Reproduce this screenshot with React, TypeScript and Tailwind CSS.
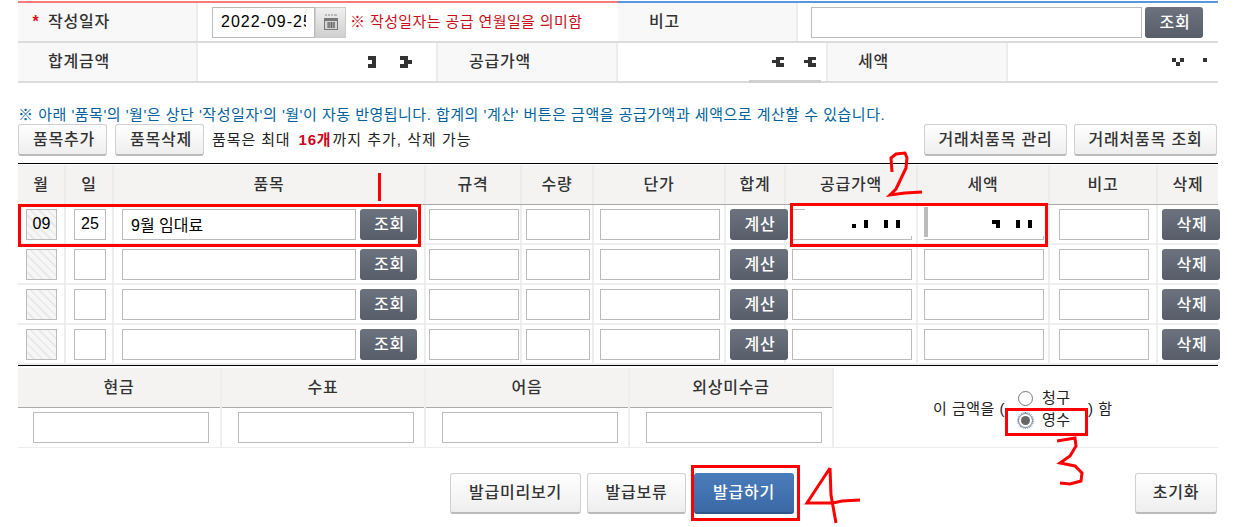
import React from 'react';

const font = '[font-family:"Liberation_Sans","Noto_Sans_CJK_KR",sans-serif]';

const hatch =
  'bg-[repeating-linear-gradient(45deg,#f6f6f6_0px,#f6f6f6_4px,#e9e9e9_4px,#e9e9e9_6px)]';

const Input: React.FC<{ className?: string; value?: string; disabled?: boolean }> = ({ className = '', value = '', disabled }) => (
  <input
    readOnly
    value={value}
    className={`h-[31px] shrink-0 border border-[#bbb] text-[16px] text-black outline-none ${disabled ? hatch : 'bg-white'} ${className}`}
  />
);

const DarkButton: React.FC<{ label: string; className?: string }> = ({ label, className = 'w-[58px]' }) => (
  <button className={`relative z-10 flex h-[31px] shrink-0 items-center justify-center rounded-[3px] bg-gradient-to-b from-[#6d737e] to-[#575d69] pl-[2px] pt-[2px] text-[16px] font-medium tracking-[0.8px] text-white ${className}`}>
    {label}
  </button>
);

const LightButton: React.FC<{ label: string; className?: string }> = ({ label, className = '' }) => (
  <button
    className={`flex shrink-0 items-center justify-center rounded-[3px] border border-[#d0d0d0] border-b-2 border-b-[#bbb] bg-gradient-to-b from-white to-[#eeeeee] text-[16px] font-medium tracking-[0.8px] text-[#333] ${className}`}
  >
    {label}
  </button>
);

const Blocks: React.FC<{ width: number; height: number; fill: string; rects: number[][] }> = ({ width, height, fill, rects }) => (
  <svg width={width} height={height} className="shrink-0">
    {rects.map(([x, y, w, h], index) => (
      <rect key={index} x={x} y={y} width={w} height={h} fill={fill} />
    ))}
  </svg>
);

const Label: React.FC<{ text: string; className?: string }> = ({ text, className = '' }) => (
  <div className={`flex items-center border-r-2 border-[#ececec] bg-[#f8f8f8] pl-[30px] text-[16px] font-medium tracking-[0.8px] text-[#333] ${className}`}>
    {text}
  </div>
);

const columns = 'grid grid-cols-[48px_48px_312px_96px_72px_132px_60px_132px_132px_108px_60px]';
const headers = ['월', '일', '품목', '규격', '수량', '단가', '합계', '공급가액', '세액', '비고', '삭제'];
const payments = [
  { title: '현금', pad: 'pl-[15px]' },
  { title: '수표', pad: 'pl-[16px]' },
  { title: '어음', pad: 'pl-[16px]' },
  { title: '외상미수금', pad: 'pl-[16px]' },
];
const cellLine = 'flex items-center border-r-2 border-[#eeeeee]';

const ItemRow: React.FC<{ first?: boolean }> = ({ first }) => (
  <div className={`${columns} h-10 border-b-2 border-[#eeeeee]`}>
    <div className={`${cellLine} pl-[8px]`}>
      <Input disabled value={first ? '09' : ''} className="w-[31px] px-[4px] text-center text-[#444]" />
    </div>
    <div className={`${cellLine} pl-[8px]`}>
      <Input value={first ? '25' : ''} className="w-[32px] px-[4px] text-center" />
    </div>
    <div className={`${cellLine} gap-[4px] pl-[8px]`}>
      <Input value={first ? '9월 임대료' : ''} className="w-[234px] pl-[8px]" />
      <DarkButton label="조회" className="w-[57px]" />
    </div>
    <div className={`${cellLine} pl-[3px]`}>
      <Input className="w-[90px]" />
    </div>
    <div className={`${cellLine} pl-[4px]`}>
      <Input className="w-[64px]" />
    </div>
    <div className={`${cellLine} pl-[6px]`}>
      <Input className="w-[120px]" />
    </div>
    <div className={`${cellLine} pl-[4px]`}>
      <DarkButton label="계산" />
    </div>
    <div className={`${cellLine} pl-[6px]`}>
      {first ? (
        <div className="relative flex h-[31px] w-[120px] shrink-0 items-center justify-end border-b border-[#bbb] pr-[12px]">
          <span className="absolute left-0 top-0 h-px w-[13px] bg-[#bbb]" />
          <span className="absolute bottom-0 right-0 h-[3px] w-px bg-[#bbb]" />
          <Blocks width={48} height={8} fill="#000" rects={[[0, 4, 4, 4], [12, 0, 4, 8], [32, 0, 4, 8], [44, 0, 4, 8]]} />
        </div>
      ) : (
        <Input className="w-[120px]" />
      )}
    </div>
    <div className={`${cellLine} pl-[6px]`}>
      {first ? (
        <div className="relative flex h-[31px] w-[120px] shrink-0 items-center justify-end border-b border-[#bbb] pr-[12px]">
          <span className="absolute -top-[2px] left-0 h-[30px] w-[4px] bg-[#bbb]" />
          <span className="absolute bottom-0 right-0 h-[3px] w-px bg-[#bbb]" />
          <Blocks width={40} height={8} fill="#000" rects={[[0, 0, 8, 4], [4, 4, 4, 4], [24, 0, 4, 8], [36, 0, 4, 8]]} />
        </div>
      ) : (
        <Input className="w-[120px]" />
      )}
    </div>
    <div className={`${cellLine} pl-[9px]`}>
      <Input className="w-[90px]" />
    </div>
    <div className="flex items-center pl-[4px]">
      <DarkButton label="삭제" />
    </div>
  </div>
);

const App: React.FC = () => {
  return (
    <div className={`relative h-[527px] w-[1241px] overflow-hidden bg-white pl-[18px] pt-px ${font}`}>
      <div className="w-[1200px]">
        <div className="flex h-[2px]">
          <div className="w-[600px] bg-[#f87a7a]" />
          <div className="w-[600px] bg-[#5b97e0]" />
        </div>

        <div className="grid h-10 grid-cols-[180px_420px_180px_420px] border-b-2 border-[#dcdcdc]">
          <div className="flex items-center border-r-2 border-[#ececec] bg-[#f8f8f8] pl-[14px] text-[16px] font-medium tracking-[0.8px] text-[#333]">
            <span className="mr-[8px] w-[8px] text-center font-bold leading-none text-[#d8141c]">*</span>
            작성일자
          </div>
          <div className="flex items-center pl-[14px]">
            <Input value="2022-09-25" className="w-[103px] px-[8px] tracking-[1px]" />
            <div className="flex h-[31px] w-[31px] shrink-0 items-center justify-center border border-[#ccc] bg-gradient-to-b from-[#f0f0f0] to-[#cfcfcf]">
              <svg width="14" height="16" viewBox="0 0 14 16">
                <path d="M1 1h2M4 1h2M7 1h2M10 1h3" stroke="#888" strokeWidth="1" />
                <rect x="0.5" y="4.5" width="13" height="11" fill="#d4d4d4" stroke="#777" />
                <rect x="1" y="5" width="12" height="2" fill="#777" />
                <path d="M3 9h8M3 11h8M3 13h8M5 8v6M7.5 8v6M10 8v6" stroke="#666" strokeWidth="1" />
              </svg>
            </div>
            <span className="ml-[4px] whitespace-nowrap text-[15px] tracking-[0.4px] text-[#c8101a]">※ 작성일자는 공급 연월일을 의미함</span>
          </div>
          <Label text="비고" className="pl-[31px]" />
          <div className="flex items-center gap-[3px] pl-[13px]">
            <Input className="w-[331px]" />
            <DarkButton label="조회" />
          </div>
        </div>

        <div className="grid h-10 grid-cols-[180px_240px_180px_210px_180px_210px] border-b-2 border-[#dcdcdc]">
          <Label text="합계금액" />
          <div className="flex items-center justify-end border-r-2 border-[#ececec] pr-[24px]">
            <Blocks width={44} height={12} fill="#333" rects={[[0, 0, 8, 4], [4, 4, 4, 4], [0, 8, 8, 4], [32, 0, 8, 4], [36, 4, 8, 4], [32, 8, 8, 4]]} />
          </div>
          <Label text="공급가액" className="pl-[31px]" />
          <div className="relative flex items-center justify-end border-r-2 border-[#ececec] pr-[10px]">
            <Blocks width={44} height={10} fill="#333" rects={[[4, 0, 8, 3], [0, 3, 8, 3], [4, 6, 8, 4], [36, 0, 8, 3], [32, 3, 8, 3], [36, 6, 8, 4]]} />
            <span className="absolute bottom-[-2px] left-[131px] h-[3px] w-[72px] bg-[#cfcfcf]" />
          </div>
          <Label text="세액" />
          <div className="flex items-center justify-end pr-[11px]">
            <Blocks width={35} height={8} fill="#333" rects={[[0, 0, 4, 4], [8, 0, 4, 4], [4, 4, 4, 4], [31, 0, 4, 4]]} />
          </div>
        </div>

        <p className="mt-[22px] h-[19px] whitespace-nowrap text-[15px] leading-[19px] tracking-[0.5px] text-[#00629c]">
          ※ 아래 '품목'의 '월'은 상단 '작성일자'의 '월'이 자동 반영됩니다. 합계의 '계산' 버튼은 금액을 공급가액과 세액으로 계산할 수 있습니다.
        </p>

        <div className="flex h-[32px] items-center">
          <LightButton label="품목추가" className="h-[32px] w-[89px] pl-[3px]" />
          <LightButton label="품목삭제" className="ml-[8px] h-[32px] w-[89px] pl-[3px]" />
          <span className="ml-[8px] text-[15px] tracking-[0.9px] text-[#222]">품목은 최대</span>
          <span className="ml-[8px] text-[15px] font-bold tracking-[0.8px] text-[#d0021b]">16개</span>
          <span className="ml-[1px] text-[15px] tracking-[1px] text-[#222]">까지 추가, 삭제 가능</span>
          <LightButton label="거래처품목 관리" className="ml-auto h-[32px] w-[143px]" />
          <LightButton label="거래처품목 조회" className="ml-[7px] mr-px h-[32px] w-[143px]" />
        </div>

        <div className="mt-[7px] border-t border-black pt-px">
          <div className={`${columns} h-10 border-b border-[#aaaaaa] bg-[#f4f3f2]`}>
            {headers.map((header, index) => (
              <div
                key={header}
                className={`flex items-center justify-center text-[16px] font-medium tracking-[0.8px] text-[#333] ${index < headers.length - 1 ? 'border-r-2 border-[#ebebeb]' : ''}`}
              >
                {header}
              </div>
            ))}
          </div>
          <ItemRow first />
          <ItemRow />
          <ItemRow />
          <ItemRow />
        </div>

        <div className="grid h-[83px] grid-cols-[204px_204px_204px_204px_384px] border-t border-black pt-[2px]">
          {payments.map(({ title, pad }) => (
            <div key={title} className="flex flex-col border-b border-r-2 border-[#eeeeee]">
              <div className="flex h-10 shrink-0 items-center justify-center border-b border-[#aaaaaa] bg-[#f4f3f2] text-[16px] font-medium tracking-[0.8px] text-[#333]">
                {title}
              </div>
              <div className={`flex flex-1 items-center ${pad}`}>
                <Input className="w-[176px]" />
              </div>
            </div>
          ))}
          <div className="flex items-center border-b border-[#eeeeee] pl-[99px] pt-[4px] text-[15px] tracking-[0.5px] text-[#222]">
            <span className="w-[72px] shrink-0 whitespace-nowrap">이 금액을 (</span>
            <div className="flex w-[83px] shrink-0 flex-col gap-[6px] pl-[13px]">
              <label className="flex h-[16px] items-center gap-[9px]">
                <span className="h-[15px] w-[15px] shrink-0 rounded-full border border-[#777] bg-white" />
                청구
              </label>
              <label className="flex h-[16px] items-center gap-[9px]">
                <span className="flex h-[15px] w-[15px] shrink-0 items-center justify-center rounded-full border border-[#777] bg-white outline-1 outline-dotted outline-[#5b8fe0]">
                  <span className="h-[9px] w-[9px] rounded-full bg-[#666]" />
                </span>
                영수
              </label>
            </div>
            <span className="whitespace-nowrap">) 함</span>
          </div>
        </div>

        <div className="mt-[25px] flex h-[41px] items-start">
          <LightButton label="발급미리보기" className="ml-[432px] h-[41px] w-[131px]" />
          <LightButton label="발급보류" className="ml-[6px] h-[41px] w-[99px]" />
          <button className="ml-[8px] flex h-[41px] w-[100px] shrink-0 items-center justify-center rounded-[3px] border-b-2 border-[#2f5788] bg-gradient-to-b from-[#4b7cba] to-[#3a69a5] text-[16px] font-medium tracking-[0.8px] text-white">
            발급하기
          </button>
          <LightButton label="초기화" className="ml-[341px] h-[41px] w-[82px]" />
        </div>
      </div>

      {/* red marks drawn over the capture */}
      <div className="pointer-events-none absolute left-[18px] top-[204px] z-20 h-[43px] w-[403px] border-[3px] border-[#ff0000]" />
      <div className="pointer-events-none absolute left-[790px] top-[203px] z-20 h-[44px] w-[258px] border-[3px] border-[#ff0000]" />
      <div className="pointer-events-none absolute left-[1005px] top-[408px] z-20 h-[28px] w-[83px] border-[3px] border-[#ff0000]" />
      <div className="pointer-events-none absolute left-[691px] top-[465px] z-20 h-[56px] w-[109px] border-[3px] border-[#ff0000]" />
      <svg width="1241" height="527" className="pointer-events-none absolute left-0 top-0 z-20" fill="none" stroke="#ff0000" strokeWidth="3">
        <path d="M379.5 173V201" />
        <path d="M892 172L891 158L896 154L905 153L907 158L906 168L896 189L890 195L905 193L922 192" />
        <path d="M1057 441L1075 438L1076 446L1070 456L1060 463L1075 466L1082 473L1081 481L1070 484L1060 483" />
        <path d="M830 468L807 503L833 503L842 501L860 500M830 468L831 495L836 523" />
      </svg>
    </div>
  );
};

export default App;
